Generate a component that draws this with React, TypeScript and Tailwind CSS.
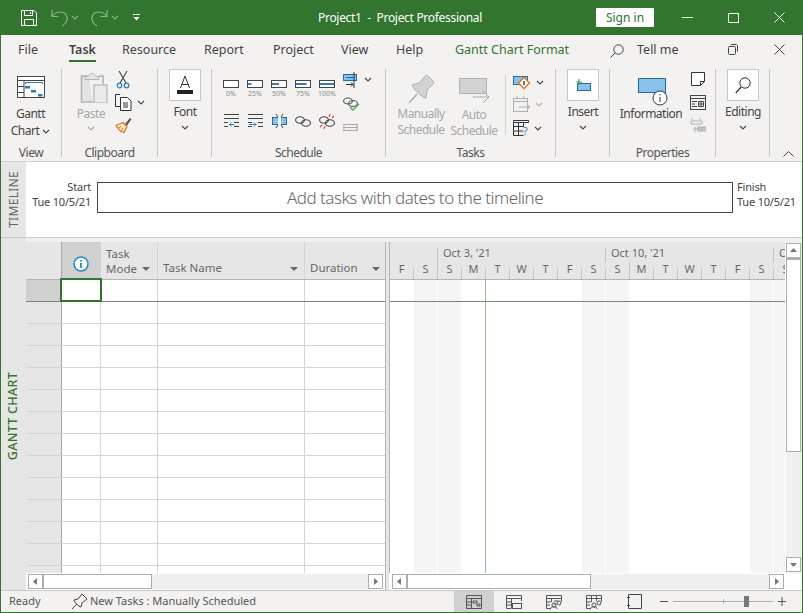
import React from 'react';

const font = "font-['Noto_Sans',sans-serif]";

const Chevron = ({ c = '#444', w = 8 }: { c?: string; w?: number }) => (
  <svg width={w} height="5" viewBox="0 0 8 5" fill="none" stroke={c} strokeWidth="1.1">
    <path d="M1 1l3 3 3-3" />
  </svg>
);

const BigBtn = ({ label, children }: { label: string; children: React.ReactNode }) => (
  <div className="flex flex-col items-center">
    <div className="w-8 h-8 bg-white border border-[#c8c8c8] flex items-center justify-center mx-auto">{children}</div>
    <div className="mt-[1px] leading-[20px] text-[#444]">{label}</div>
    <div className="mt-[3px]"><Chevron /></div>
  </div>
);

const Group = ({ w, label, children }: { w: string; label: string; children: React.ReactNode }) => (
  <div className={`${w} h-[88px] shrink-0 flex flex-col border-r border-[#c6c6c6]`}>
    <div className="h-[70px] flex">{children}</div>
    <div className="mt-auto -mb-[4px] text-center text-[12px] leading-[16px] text-[#555]">{label}</div>
  </div>
);

const Prog = ({ f, label }: { f: number; label: string }) => (
  <div className="w-6 flex flex-col items-center">
    <svg width="16" height="8" viewBox="0 0 16 8">
      <rect x=".5" y=".5" width="15" height="7" fill="#fff" stroke="#444" />
      {f > 0 && <rect x="1" y="3" width={14 * f} height="2" fill="#2b7cc0" />}
    </svg>
    <div className="text-[7px] tracking-normal leading-[9px] mt-px text-[#888] whitespace-nowrap">{label}</div>
  </div>
);

const SmallIcon = ({ children }: { children: React.ReactNode }) => (
  <div className="w-6 h-4 flex justify-center items-center">{children}</div>
);

const Ribbon = () => (
  <div className="h-[99px] bg-[#f3f2f1] flex pt-[6px] border-b border-[#d0d0d0] text-[12px] tracking-[-0.5px] shrink-0">
    <Group w="w-[61px]" label="View">
      <div className="w-full flex flex-col items-center pt-[7px] pr-px">
        <svg width="28" height="23" viewBox="0 0 28 23" fill="none">
          <rect x=".5" y=".5" width="27" height="21" fill="#fff" stroke="#444" />
          <path d="M1 4.5h26M7 5v17M1 10.5h6M1 16.5h6" stroke="#444" />
          <path d="M8.5 8V6.5h17V8" stroke="#2b7cc0" />
          <rect x="8" y="10" width="5" height="2.5" fill="#2b7cc0" />
          <rect x="14" y="14" width="5" height="2.5" fill="#2b7cc0" />
          <rect x="21" y="18" width="4.5" height="2.5" fill="#2b7cc0" />
        </svg>
        <div className="mt-[7px] leading-[16px] text-[#444]">Gantt</div>
        <div className="mt-px leading-[16px] text-[#444] flex items-center gap-[3px]">Chart <Chevron /></div>
      </div>
    </Group>

    <Group w="w-[96px]" label="Clipboard">
      <div className="w-[53px] ml-[5px] flex flex-col items-center pt-[4px]">
        <svg width="28" height="30" viewBox="0 0 28 30" fill="none">
          <path d="M9 3H1.5v26H13" fill="#e4e4e4" stroke="#b4b4b4" strokeWidth="1.6" />
          <path d="M19 3h4v8" stroke="#b4b4b4" strokeWidth="1.6" />
          <path d="M5 3.5h3l3-3 h2l3 3h3v3H5z" fill="#e4e4e4" stroke="#b4b4b4" />
          <rect x="14" y="12" width="13" height="18" fill="#ebebeb" stroke="#a8a8a8" />
        </svg>
        <div className="mt-[3px] mr-[5px] leading-[16px] text-[#a6a6a6]">Paste</div>
        <div className="mt-[4px] mr-[5px]"><Chevron c="#a6a6a6" /></div>
      </div>
      <div className="flex flex-col pt-[2px] -ml-[5px]">
        <svg width="14" height="18" viewBox="0 0 14 18" fill="none" className="ml-[1px]">
          <path d="M3 0l7 12M11 0L4 12" stroke="#444" strokeWidth="1.1" />
          <circle cx="3.5" cy="14.5" r="2.3" stroke="#2b7cc0" strokeWidth="1.2" />
          <circle cx="10.5" cy="14.5" r="2.3" stroke="#2b7cc0" strokeWidth="1.2" />
        </svg>
        <div className="flex items-center mt-[5px]">
          <svg width="17" height="17" viewBox="0 0 17 17" fill="none" stroke="#333">
            <path d="M5 .5H.5v12H5" />
            <path d="M5.5 3.5h7l3.5 3.5v9.5H5.5z" fill="#fff" />
            <path d="M8 9h5M8 11h5M8 13h5" />
          </svg>
          <span className="ml-[5px]"><Chevron /></span>
        </div>
        <svg width="17" height="16" viewBox="0 0 17 16" fill="none" className="mt-[6px]">
          <path d="M1 8.5l7-3 4 4-3 6C6 15 3 12 1 8.5z" fill="#fbe3c8" stroke="#e3791c" strokeWidth="1.3" />
          <path d="M3 11.5l3-2M6 14l2-3" stroke="#e3791c" />
          <path d="M10 7l5-6 1.4 1.2L12 8.5z" fill="#555" />
        </svg>
      </div>
    </Group>

    <Group w="w-[54px]" label="">
      <div className="w-full flex justify-center pl-px">
        <BigBtn label="Font">
          <svg width="16" height="20" viewBox="0 0 16 20" fill="none">
            <path d="M3.5 13L8 1l4.5 12M5 9.5h6" stroke="#333" />
            <rect y="15" width="16" height="4" fill="#222" />
          </svg>
        </BigBtn>
      </div>
    </Group>

    <Group w="w-[174px]" label="Schedule">
      <div className="flex flex-col ml-[7px] pt-[11px]">
        <div className="flex h-[27px]">
          <Prog f={0} label="0%" />
          <Prog f={0.25} label="25%" />
          <Prog f={0.5} label="50%" />
          <Prog f={0.75} label="75%" />
          <Prog f={1} label="100%" />
        </div>
        <div className="flex mt-[6px]">
          <SmallIcon>
            <svg width="15" height="14" viewBox="0 0 15 14" fill="none" stroke="#444">
              <path d="M0 .5h15M0 4.5h15M0 8.5h4M0 12.5h4M10 8.5h5M10 12.5h5" />
              <path d="M10 10.5H5M7.5 8.5l-2 2 2 2" stroke="#1e88d2" />
            </svg>
          </SmallIcon>
          <SmallIcon>
            <svg width="15" height="14" viewBox="0 0 15 14" fill="none" stroke="#444">
              <path d="M0 .5h15M0 4.5h15M0 8.5h4M0 12.5h4M10 8.5h5M10 12.5h5" />
              <path d="M1 10.5h7M6 8.5l2 2-2 2" stroke="#1e88d2" />
            </svg>
          </SmallIcon>
          <SmallIcon>
            <svg width="15" height="15" viewBox="0 0 15 15" fill="none">
              <rect x=".5" y="3.5" width="14" height="7" fill="#8ac0ec" stroke="#1f6cb0" />
              <rect x="6" y="2" width="3" height="10" fill="#fff" />
              <path d="M4 0l2 3M11 0L9 3M4 14l2-3M11 14l-2-3" stroke="#444" />
            </svg>
          </SmallIcon>
          <SmallIcon>
            <svg width="16" height="11" viewBox="0 0 16 11" fill="none" stroke="#444" strokeWidth="1.1">
              <ellipse cx="5" cy="4" rx="4.4" ry="3.2" />
              <ellipse cx="11" cy="7" rx="4.4" ry="3.2" />
            </svg>
          </SmallIcon>
          <SmallIcon>
            <svg width="16" height="15" viewBox="0 0 16 15" fill="none" strokeWidth="1.1">
              <ellipse cx="5" cy="6" rx="4.4" ry="3.2" stroke="#444" />
              <ellipse cx="11" cy="9" rx="4.4" ry="3.2" stroke="#444" />
              <path d="M11 0l-1 3M15 2l-2 2M1 13l2-2M5 15l1-3" stroke="#e8403a" />
            </svg>
          </SmallIcon>
        </div>
      </div>
      <div className="flex flex-col pl-[4px] pt-[3px]">
        <div className="flex items-center">
          <svg width="17" height="16" viewBox="0 0 17 16" fill="none">
            <rect x=".5" y="2.5" width="13" height="6" fill="#8ac0ec" stroke="#1f6cb0" />
            <path d="M3 5.5h8" stroke="#1f6cb0" />
            <path d="M11 0v16M3 12.5h7M8 10.5l2 2-2 2" stroke="#333" />
          </svg>
          <span className="ml-[4px] mb-[1px]"><Chevron /></span>
        </div>
        <svg width="17" height="14" viewBox="0 0 17 14" fill="none" className="mt-[9px]" strokeWidth="1.1">
          <ellipse cx="5" cy="4" rx="4.4" ry="3" stroke="#555" />
          <ellipse cx="10" cy="6.5" rx="4.4" ry="3" stroke="#555" />
          <path d="M7 10l3 3 6-6" stroke="#4cae5a" strokeWidth="1.4" />
        </svg>
        <svg width="16" height="7" viewBox="0 0 16 7" fill="none" className="mt-[13px]" stroke="#a8a8a8">
          <path d="M0 .5h15M0 3.5h15M0 6.5h15" />
          <path d="M1 1v5M14 1v5" />
        </svg>
      </div>
    </Group>

    <Group w="w-[170px]" label="Tasks">
      <div className="w-[119px] flex leading-[16px] text-[#a6a6a6] text-center">
        <div className="w-[70px] flex flex-col items-center pt-[3px]">
          <svg width="28" height="33" viewBox="0 0 28 33" fill="none" className="ml-px">
            <path d="M1 31l8-9" stroke="#a8a8a8" strokeWidth="1.2" />
            <path d="M4 13l7-2 7-8c1 0 8 6 8 8l-7 7-1 8c-2 1-14-10-14-13z" fill="#d2d2d2" stroke="#b0b0b0" />
          </svg>
          <div className="mt-[1px]">Manually</div>
          <div>Schedule</div>
        </div>
        <div className="w-[50px] -ml-[7px] flex flex-col items-center pt-[9px]">
          <svg width="31" height="27" viewBox="0 0 31 27" fill="none">
            <rect x=".5" y=".5" width="27" height="15" fill="#d2d2d2" stroke="#b0b0b0" />
            <path d="M14 19h16M24 13l6 6-6 6" stroke="#a8a8a8" />
          </svg>
          <div className="mt-[2px]">Auto</div>
          <div className="whitespace-nowrap">Schedule</div>
        </div>
      </div>
      <div className="w-px h-[59px] bg-[#d0d0d0] mt-[6px]" />
      <div className="flex flex-col pl-[7px] pt-[7px]">
        <div className="flex items-center h-[13px]">
          <svg width="17" height="14" viewBox="0 0 17 14" fill="none">
            <rect x=".5" y=".5" width="14" height="8" fill="#8ac0ec" stroke="#1f6cb0" />
            <path d="M11 1.5l5.5 5.5-5.5 5.5L5.5 7z" fill="#fff" stroke="#e3791c" strokeWidth="1.5" />
            <rect x="10.3" y="5" width="1.4" height="4" fill="#333" />
          </svg>
          <span className="ml-[6px]"><Chevron /></span>
        </div>
        <div className="flex items-center mt-[7px]">
          <svg width="18" height="16" viewBox="0 0 18 16" fill="none" stroke="#b0b0b0">
            <rect x=".5" y="2.5" width="14" height="13" />
            <path d="M1 5.5h13M4 0v3M11 0v3M6 11h11M14 8l3 3-3 3" />
          </svg>
          <span className="ml-[4px]"><Chevron c="#b0b0b0" /></span>
        </div>
        <div className="flex items-center mt-[8px]">
          <svg width="17" height="16" viewBox="0 0 17 16" fill="none" stroke="#333" className="overflow-visible">
            <path d="M.5.5h15v2h-15zM.5 2.5v13h10M.5 6.5h10M.5 11h10M5.5 3v12.5M10.5 3v4" />
            <text x="10" y="15" fontSize="11" fill="#1e88d2" stroke="none" fontFamily="Noto Sans">?</text>
          </svg>
          <span className="ml-[4px]"><Chevron /></span>
        </div>
      </div>
    </Group>

    <Group w="w-[54px]" label="">
      <div className="w-full flex justify-center pl-px">
        <BigBtn label="Insert">
          <svg width="16" height="12" viewBox="0 0 16 12" fill="none">
            <rect x="2.5" y="4.5" width="13" height="7" fill="#8ac0ec" stroke="#1f6cb0" />
            <path d="M4 0v6M1 3h6" stroke="#2fa04a" strokeWidth="1.2" />
          </svg>
        </BigBtn>
      </div>
    </Group>

    <Group w="w-[106px]" label="Properties">
      <div className="w-[82px] flex flex-col items-center pt-[9px]">
        <svg width="32" height="28" viewBox="0 0 32 28" fill="none" className="ml-[6px]">
          <rect x=".5" y=".5" width="27" height="14" fill="#8ac0ec" stroke="#1f6cb0" />
          <circle cx="22" cy="20" r="7" fill="#fff" stroke="#333" />
          <path d="M22 19v5M22 16v1.5" stroke="#333" />
        </svg>
        <div className="leading-[16px] text-[#444] whitespace-nowrap">Information</div>
      </div>
      <div className="flex flex-col pt-[3px] -ml-[2px]">
        <svg width="15" height="15" viewBox="0 0 15 15" fill="none" stroke="#333" className="ml-px">
          <path d="M.5.5h13v9l-4 4h-9zM9.5 13.5v-4h4" fill="#fff" />
        </svg>
        <svg width="16" height="15" viewBox="0 0 16 15" fill="none" stroke="#444" className="mt-[8px]">
          <rect x=".5" y=".5" width="15" height="14" />
          <path d="M1 3.5h14M2 6.5h5M2 9h3M2 11.5h5M8.5 6.5h5v5h-5zM8.5 9h5M11 7v4" />
        </svg>
        <svg width="16" height="16" viewBox="0 0 16 16" fill="none" stroke="#b0b0b0" className="mt-[8px]">
          <path d="M2 0v2M10 0v2M1 3h11v3M1 3v3h11M3 11h5M5 9v5" />
          <rect x="8" y="9" width="8" height="4" fill="#c4c4c4" />
        </svg>
      </div>
    </Group>

    <Group w="w-[54px]" label="">
      <div className="w-full flex justify-center pl-px">
        <BigBtn label="Editing">
          <svg width="16" height="17" viewBox="0 0 16 17" fill="none" stroke="#333">
            <circle cx="10" cy="6" r="5.2" />
            <path d="M6.2 10L.8 16" strokeWidth="1.2" />
          </svg>
        </BigBtn>
      </div>
    </Group>

    <div className="flex-1 h-[88px] flex items-end justify-end pr-[8px]">
      <svg width="11" height="6" viewBox="0 0 11 6" fill="none" stroke="#444"><path d="M.5 5.5l5-5 5 5" /></svg>
    </div>
  </div>
);

const TitleBar = () => (
  <div className="h-[35px] bg-[#31752f] flex items-center text-white shrink-0">
    <div className="w-[318px] flex items-center pl-[21px]">
      <svg width="16" height="16" viewBox="0 0 16 16" fill="none" stroke="#fff">
        <path d="M.5.5h12.5l2.5 2.5v12.5H.5z" />
        <path d="M3.5 1v4.5h8V1M3.5 15v-5.5h9V15M9.5 2v2" />
      </svg>
      <svg width="18" height="18" viewBox="0 0 18 18" fill="none" stroke="#8cb48a" strokeWidth="1.2" className="ml-[14px]">
        <path d="M1 1v6.5h6.5M1.5 7C5 2 14 1 16 8c1 4-2 7-5 9" />
      </svg>
      <span className="ml-[2px]"><Chevron c="#8cb48a" /></span>
      <svg width="18" height="18" viewBox="0 0 18 18" fill="none" stroke="#8cb48a" strokeWidth="1.2" className="ml-[11px]">
        <path d="M17 1v6.5h-6.5M16.5 7C13 2 4 1 2 8c-1 4 2 7 5 9" />
      </svg>
      <span className="ml-[3px]"><Chevron c="#8cb48a" /></span>
      <svg width="7" height="7" viewBox="0 0 7 7" className="ml-[14px]" fill="none" stroke="#fff">
        <path d="M0 .5h7" />
        <path d="M.5 3h6L3.5 6.5z" fill="#fff" stroke="none" />
      </svg>
    </div>
    <div className="w-[278px] text-[12px] tracking-[-0.3px] whitespace-pre">Project1  -  Project Professional</div>
    <div className="w-[58px] h-[19px] bg-white rounded-[1px] text-[#31752f] text-[12px] leading-[19px] text-center">Sign in</div>
    <div className="ml-[28px] w-[11px] h-px bg-white" />
    <div className="ml-[35px] w-[11px] h-[10px] border border-white" />
    <svg width="11" height="11" viewBox="0 0 11 11" stroke="#fff" className="ml-[35px]"><path d="M.5.5l10 10M10.5.5l-10 10" /></svg>
  </div>
);

const tabs: [string, string][] = [
  ['File', 'w-[68px] pl-[17px]'],
  ['Task', 'w-[53px]'],
  ['Resource', 'w-[82px]'],
  ['Report', 'w-[69px]'],
  ['Project', 'w-[68px]'],
  ['View', 'w-[55px]'],
  ['Help', 'w-[59px]'],
];

const Tabs = () => (
  <div className="h-[28px] bg-[#f3f2f1] flex items-center text-[12.5px] text-[#444] shrink-0 pt-[3px]">
    {tabs.map(([t, w]) => (
      <div key={t} className={`${w} h-full flex items-center ${t === 'Task' ? 'relative font-semibold' : ''}`}>
        {t}
        {t === 'Task' && <div className="absolute left-0 bottom-[1px] w-[27px] h-[2px] bg-[#31752f]" />}
      </div>
    ))}
    <div className="w-[155px] text-[#31752f] whitespace-nowrap">Gantt Chart Format</div>
    <svg width="14" height="14" viewBox="0 0 14 14" fill="none" stroke="#444"><circle cx="8.5" cy="5.5" r="4.7" /><path d="M5 9l-4.5 4.5" /></svg>
    <div className="ml-[13px] w-[91px]">Tell me</div>
    <svg width="10" height="11" viewBox="0 0 10 11" fill="none" stroke="#444" className="-mt-[3px]"><rect x=".5" y="2.5" width="7" height="8" rx="1" /><path d="M2.5 1.5l1-1h5l1 1v6" /></svg>
    <svg width="11" height="11" viewBox="0 0 11 11" stroke="#444" className="ml-[36px] -mt-[3px]"><path d="M.5.5l10 10M10.5.5l-10 10" /></svg>
  </div>
);

const Timeline = () => (
  <div className="h-[76px] flex border-b border-[#c8c8c8] bg-white shrink-0">
    <div className="w-[25px] bg-[#e6e6e6] flex items-center justify-center shrink-0">
      <span className="[writing-mode:vertical-rl] rotate-180 text-[12px] tracking-[.3px] text-[#666]">TIMELINE</span>
    </div>
    <div className="w-[65px] text-right text-[11px] tracking-[-0.2px] leading-[15px] pt-[17px] text-[#444] whitespace-nowrap">
      <div>Start</div>
      <div>Tue 10/5/21</div>
    </div>
    <div className="ml-[6px] mt-[20px] w-[636px] h-[31px] border border-[#444] flex items-center justify-center text-[17px] tracking-[-0.5px] font-light text-[#666]">
      Add tasks with dates to the timeline
    </div>
    <div className="ml-[4px] text-[11px] tracking-[-0.2px] leading-[15px] pt-[17px] text-[#444] whitespace-nowrap">
      <div>Finish</div>
      <div>Tue 10/5/21</div>
    </div>
  </div>
);

const rowTops = Array.from({ length: 14 }, (_, i) => i);
const Tri = () => (
  <svg width="8" height="4" viewBox="0 0 8 4" className="shrink-0"><path d="M0 0h8L4 4z" fill="#666" /></svg>
);

const TaskTable = () => (
  <div className="w-[359px] flex flex-col overflow-hidden shrink-0 bg-white">
    <div className="h-[38px] grid grid-cols-[36px_39px_57px_147px_80px] bg-[#e6e6e6] border-b border-[#b4b4b4] text-[11.5px] text-[#666] shrink-0">
      <div className="border-r border-[#a8a8a8]" />
      <div className="bg-[#d0d0d0] border-r border-[#d4d4d4] flex items-center justify-center pt-[7px]">
        <svg width="16" height="16" viewBox="0 0 16 16" fill="none">
          <circle cx="8" cy="8" r="7" fill="#fff" stroke="#1e88d2" strokeWidth="1.5" />
          <path d="M8 7v5M8 4v1.6" stroke="#1e88d2" strokeWidth="1.8" />
        </svg>
      </div>
      <div className="border-r border-[#d4d4d4] pl-[5px] pt-[4px] leading-[15px]">
        <div>Task</div>
        <div className="flex items-center gap-[5px]">Mode <Tri /></div>
      </div>
      <div className="border-r border-[#d4d4d4] flex items-end justify-between pl-[5px] pr-[6px] pb-[3px]">
        <span>Task Name</span>
        <span className="pb-[5px]"><Tri /></span>
      </div>
      <div className="flex items-end justify-between pl-[5px] pr-[5px] pb-[3px]">
        <span>Duration</span>
        <span className="pb-[5px]"><Tri /></span>
      </div>
    </div>
    {rowTops.map((i) => (
      <div key={i} className={`h-[22px] shrink-0 grid grid-cols-[36px_39px_57px_147px_80px] border-b ${i === 0 ? 'border-[#808080]' : 'border-[#d4d4d4]'}`}>
        <div className={`border-r border-[#a8a8a8] ${i === 0 ? 'bg-[#d0d0d0]' : 'bg-[#e6e6e6]'}`} />
        <div className="border-r border-[#d4d4d4] relative">
          {i === 0 && <div className="absolute -left-[2px] -top-[2px] w-[42px] h-[24px] border-2 border-[#31752f]" />}
        </div>
        <div className="border-r border-[#d4d4d4]" />
        <div className="border-r border-[#d4d4d4]" />
        <div />
      </div>
    ))}
  </div>
);

const days = ['F', 'S', 'S', 'M', 'T', 'W', 'T', 'F', 'S', 'S', 'M', 'T', 'W', 'T', 'F', 'S', 'S'];
const weeks = [
  { label: '', w: 'w-[47px]' },
  { label: "Oct 3, '21", w: 'w-[168px]' },
  { label: "Oct 10, '21", w: 'w-[168px]' },
  { label: 'Oct', w: 'w-[12px]' },
];

const Chart = () => (
  <div className="w-[396px] flex flex-col overflow-hidden relative shrink-0 border-l border-[#b4b4b4] bg-white">
    <div className="h-[38px] bg-[#e6e6e6] border-b border-[#b4b4b4] text-[11px] text-[#666] shrink-0 flex flex-col overflow-hidden">
      <div className="h-[20px] flex shrink-0">
        {weeks.map((k) => (
          <div key={k.label} className={`${k.w} shrink-0 overflow-hidden whitespace-nowrap flex`}>
            {k.label && <div className="w-px h-[14px] bg-[#c4c4c4] self-end shrink-0" />}
            {k.label && <div className="pl-[5px] pt-[3px] leading-[15px]">{k.label}</div>}
          </div>
        ))}
      </div>
      <div className="flex flex-1">
        {days.map((d, i) => (
          <div key={i} className="w-6 shrink-0 flex">
            <div className="flex-1 text-center leading-[14px]">{d}</div>
            <div className={`w-px self-end bg-[#c4c4c4] ${i === 1 || i === 9 ? 'h-full' : 'h-[11px]'}`} />
          </div>
        ))}
      </div>
    </div>
    <div className="flex flex-1">
      {days.map((d, i) => (
        <div key={i} className={`w-6 shrink-0 border-r ${i === 3 ? 'border-[#8fbf8f]' : 'border-white'} ${d === 'S' ? 'bg-[#f5f5f5]' : 'bg-white'}`} />
      ))}
    </div>
    <div className="absolute left-0 right-0 top-[59px] h-px bg-[#808080]" />
  </div>
);

const Arrow = ({ d }: { d: 'l' | 'r' | 'u' | 'd' }) => (
  <svg width="7" height="7" viewBox="0 0 7 7" fill="#777">
    {d === 'l' && <path d="M5 0v7L1 3.5z" />}
    {d === 'r' && <path d="M2 0v7l4-3.5z" />}
    {d === 'u' && <path d="M0 5h7L3.5 1z" />}
    {d === 'd' && <path d="M0 2h7L3.5 6z" />}
  </svg>
);

const ScrollBtn = ({ d }: { d: 'l' | 'r' | 'u' | 'd' }) => (
  <div className="w-[15px] h-[15px] shrink-0 bg-white border border-[#acacac] flex items-center justify-center"><Arrow d={d} /></div>
);

const HScroll = ({ w, thumb, ml }: { w: string; thumb: string; ml: string }) => (
  <div className={`${w} ${ml} h-[15px] mt-px shrink-0 flex bg-[#f0f0f0]`}>
    <ScrollBtn d="l" />
    <div className={`${thumb} h-[15px] shrink-0 bg-white border border-[#acacac]`} />
    <div className="flex-1" />
    <ScrollBtn d="r" />
  </div>
);

const Gantt = () => (
  <div className="flex-1 min-h-0 flex bg-[#f0f0f0]">
    <div className="w-[25px] bg-[#e6e6e6] flex items-center justify-center shrink-0 pt-[4px]">
      <span className="[writing-mode:vertical-rl] rotate-180 text-[12.5px] tracking-[.3px] font-medium text-[#31752f] whitespace-nowrap">GANTT CHART</span>
    </div>
    <div className="flex-1 flex flex-col min-w-0 pt-[4px]">
      <div className="h-[331px] flex shrink-0">
        <TaskTable />
        <div className="w-[4px] bg-[#e6e6e6] border-l border-[#b4b4b4] shrink-0" />
        <Chart />
        <div className="w-px bg-white shrink-0" />
        <div className="flex-1 bg-[#f0f0f0] flex flex-col pt-px">
          <ScrollBtn d="u" />
          <div className="w-[15px] h-[194px] bg-white border border-[#acacac] border-t-2 shrink-0" />
          <div className="flex-1" />
          <ScrollBtn d="d" />
          <div className="h-px" />
        </div>
      </div>
      <div className="h-[17px] flex bg-white items-start">
        <HScroll ml="ml-[2px]" w="w-[355px]" thumb="w-[109px]" />
        <div className="ml-[2px] w-[4px] self-stretch bg-[#e6e6e6] border-l border-[#b4b4b4] shrink-0" />
        <HScroll ml="ml-[3px]" w="w-[392px]" thumb="w-[184px]" />
      </div>
    </div>
  </div>
);

const StatusIcon = ({ on, children }: { on?: boolean; children: React.ReactNode }) => (
  <div className={`w-10 h-full flex items-center justify-center ${on ? 'bg-[#d0d0d0]' : ''}`}>{children}</div>
);

const viewIcon = (x: React.ReactNode) => (
  <svg width="16" height="14" viewBox="0 0 16 14" fill="none" stroke="#555">{x}</svg>
);

const StatusBar = () => (
  <div className="h-[22px] bg-[#f3f2f1] border-t border-[#c8c8c8] flex items-center text-[11px] text-[#555] shrink-0">
    <div className="w-[70px] pl-[8px]">Ready</div>
    <svg width="17" height="17" viewBox="0 0 17 17" fill="none" stroke="#444">
      <path d="M1 16l5-5M3 7l4-1 4-5 5 5-5 4-1 4c-2 0-7-5-7-7z" />
    </svg>
    <div className="ml-[2px] w-[364px] whitespace-nowrap">New Tasks : Manually Scheduled</div>
    <StatusIcon on>
      {viewIcon(<><path d="M.5.5h15v13H.5zM1 3.5h14M5.5 4v9M1 7h4M1 10h4" /><path d="M7 6h4v2H7zM11 9h3v2h-3z" /></>)}
    </StatusIcon>
    <StatusIcon>
      {viewIcon(<><path d="M15.5 6V.5H.5v13h5M1 3.5h14M5.5 4v9M1 7h4M1 10h4" /><rect x="6.5" y="8.5" width="9" height="5" /></>)}
    </StatusIcon>
    <StatusIcon>
      {viewIcon(<><path d="M5 13.5H.5V.5h15v6M1 3.5h14M5.5 4v3M1 7h4M1 10h3" /><path d="M8 6h4M8 9h2" /><circle cx="8" cy="10" r="2" /><circle cx="13" cy="8" r="2" /><path d="M4.5 14c0-2 1-2 3.5-2M11 14c0-2-1-2-3-2" /></>)}
    </StatusIcon>
    <StatusIcon>
      {viewIcon(<><path d="M5 13.5H.5V.5h15v6M1 3.5h14M5.5 1v6M10.5 1v5M1 7h4M1 10h3" /><circle cx="8" cy="10" r="2" /><circle cx="13" cy="8" r="2" /><path d="M4.5 14c0-2 1-2 3.5-2M11 14c0-2-1-2-3-2" /></>)}
    </StatusIcon>
    <StatusIcon>
      <svg width="15" height="15" viewBox="0 0 15 15" fill="none" stroke="#444">
        <path d="M1.5.5h13v14h-13zM0 3.5h3M0 11.5h3" />
      </svg>
    </StatusIcon>
    <div className="ml-[6px] w-2 h-px bg-[#555]" />
    <div className="ml-[5px] w-[100px] h-px bg-[#acacac] flex items-center shrink-0">
      <div className="ml-[50px] w-px h-[5px] bg-[#acacac]" />
      <div className="ml-[20px] w-[5px] h-[11px] bg-[#777]" />
    </div>
    <svg width="8" height="9" viewBox="0 0 8 9" stroke="#555" className="ml-[5px]"><path d="M0 4.5h8M4 0v9" /></svg>
  </div>
);

export default function App() {
  return (
    <div className={`${font} w-[803px] h-[613px] flex flex-col bg-white border-x border-b border-[#31752f] overflow-hidden`}>
      <div className="-mx-px shrink-0"><TitleBar /></div>
      <Tabs />
      <Ribbon />
      <Timeline />
      <Gantt />
      <StatusBar />
    </div>
  );
}
